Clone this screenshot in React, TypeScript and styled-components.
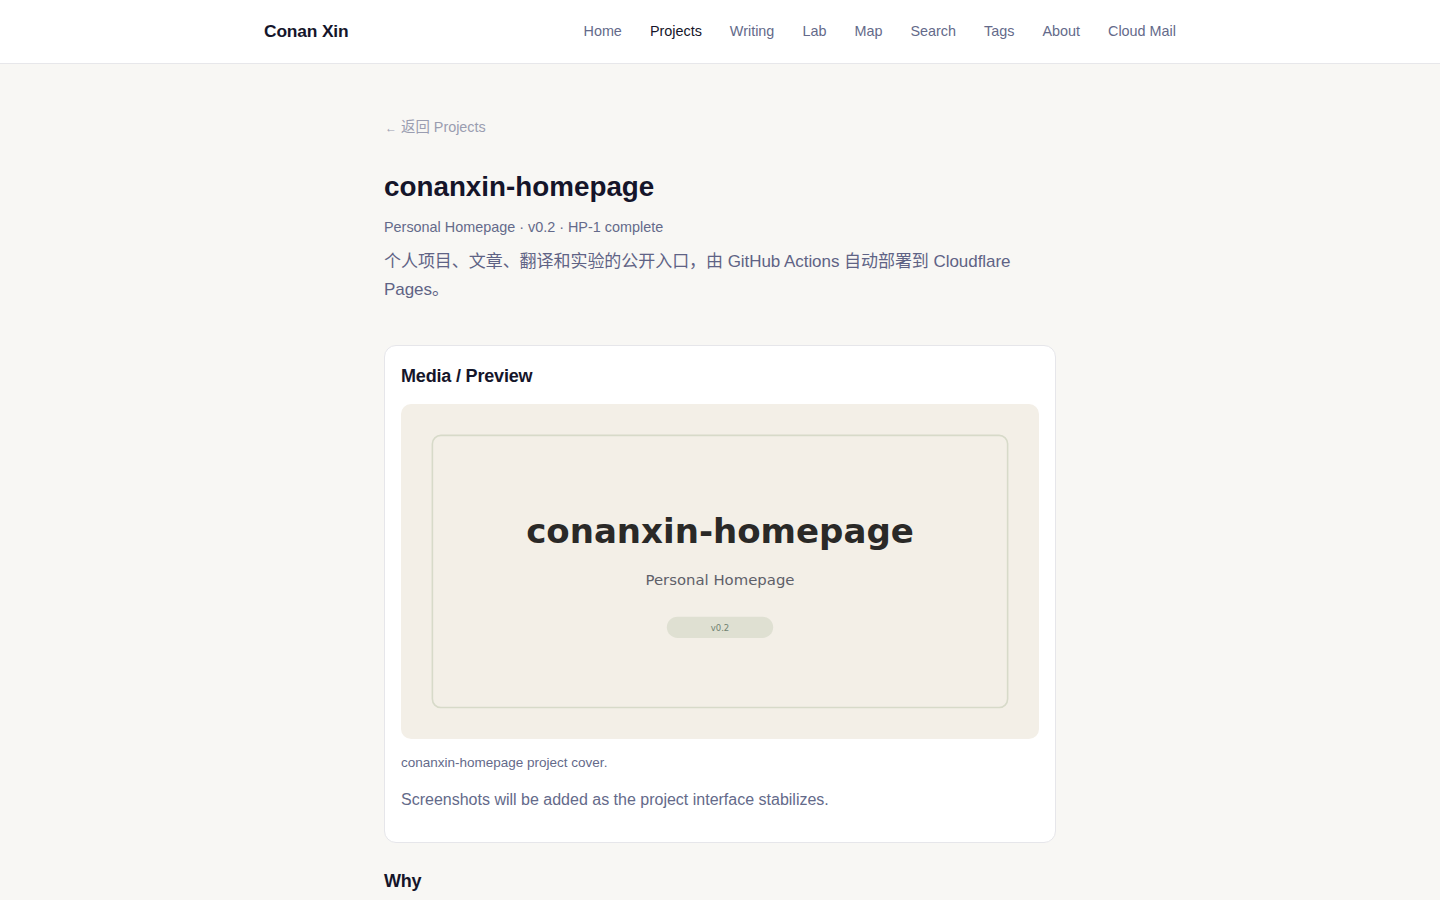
import styled, { createGlobalStyle } from 'styled-components';

const navItems = ['Home', 'Projects', 'Writing', 'Lab', 'Map', 'Search', 'Tags', 'About', 'Cloud Mail'];

const GlobalStyle = createGlobalStyle`
  * { box-sizing: border-box; }
  body {
    margin: 0;
    background: #f8f7f4;
    color: #17172b;
    font-family: "Liberation Sans", Arial, "Noto Sans CJK SC", sans-serif;
  }
`;

const Cover = () => (
  <CoverSvg viewBox="0 0 1200 630" role="img" aria-label="conanxin-homepage project cover">
    <rect width="1200" height="630" fill="#f3efe7" />
    <rect x="59" y="59" width="1082" height="512" rx="16" fill="#f3efe7" stroke="#d7dac9" strokeWidth="3" />
    <text x="600" y="262" textAnchor="middle" fontFamily="DejaVu Sans, sans-serif" fontWeight="700" fontSize="64" fill="#2a2927">
      conanxin-homepage
    </text>
    <text x="600" y="340" textAnchor="middle" fontFamily="DejaVu Sans, sans-serif" fontSize="28" fill="#5e6069">
      Personal Homepage
    </text>
    <rect x="500" y="400" width="200" height="40" rx="20" fill="#dfe0d2" />
    <text x="600" y="427" textAnchor="middle" fontFamily="DejaVu Sans, sans-serif" fontSize="16" fill="#6f8270">
      v0.2
    </text>
  </CoverSvg>
);

const App = () => {
  return (
    <>
      <GlobalStyle />
      <Header>
        <HeaderInner>
          <Logo href="#">Conan Xin</Logo>
          <Nav>
            {navItems.map(item => (
              <NavLink key={item} href="#" $active={item === 'Projects'}>
                {item}
              </NavLink>
            ))}
          </Nav>
        </HeaderInner>
      </Header>
      <Main>
        <BackLink href="#">
          <Arrow>←</Arrow> 返回 Projects
        </BackLink>
        <Title>conanxin-homepage</Title>
        <Meta>Personal Homepage · v0.2 · HP-1 complete</Meta>
        <Lead>个人项目、文章、翻译和实验的公开入口，由 GitHub Actions 自动部署到 Cloudflare Pages。</Lead>

        <Card>
          <SectionTitle>Media / Preview</SectionTitle>
          <Figure>
            <Cover />
            <Caption>conanxin-homepage project cover.</Caption>
          </Figure>
          <Note>Screenshots will be added as the project interface stabilizes.</Note>
        </Card>

        <Section>
          <SectionTitle>Why</SectionTitle>
        </Section>
      </Main>
    </>
  );
};

export default App;

const Header = styled.header`
  background: #ffffff;
  border-bottom: 1px solid #e7e7ea;
`;

const HeaderInner = styled.div`
  max-width: 912px;
  height: 63px;
  margin: 0 auto;
  padding-bottom: 2px;
  display: flex;
  align-items: center;
  justify-content: space-between;
`;

const Logo = styled.a`
  margin-top: 2px;
  font-size: 17.4px;
  font-weight: 700;
  color: #15152a;
  text-decoration: none;
  letter-spacing: -0.01em;
`;

const Nav = styled.nav`
  display: flex;
  gap: 28px;
`;

const NavLink = styled.a<{ $active?: boolean }>`
  font-size: 14.4px;
  color: ${p => (p.$active ? '#15152a' : '#646a8a')};
  text-decoration: none;
`;

const Main = styled.main`
  max-width: 672px;
  margin: 0 auto;
  padding: 51px 0 0;
`;

const BackLink = styled.a`
  display: inline-block;
  margin-left: 1px;
  font-size: 14.4px;
  color: #9a9db0;
  text-decoration: none;
`;

const Arrow = styled.span`
  font-size: 12px;
`;

const Title = styled.h1`
  margin: 34px 0 0;
  font-size: 27.8px;
  line-height: 1.2;
  font-weight: 700;
  color: #15152a;
`;

const Meta = styled.p`
  margin: 16px 0 0;
  font-size: 14.4px;
  color: #646a8a;
`;

const Lead = styled.p`
  margin: 13px 0 0;
  font-size: 17px;
  line-height: 28px;
  letter-spacing: -0.003em;
  color: #5f6385;
`;

const Card = styled.section`
  margin-top: 41px;
  padding: 18px 16px 33px;
  background: #ffffff;
  border: 1px solid #e6e6ea;
  border-radius: 12px;
`;

const SectionTitle = styled.h2`
  margin: 0;
  font-size: 18px;
  line-height: 24px;
  font-weight: 700;
  letter-spacing: -0.01em;
  color: #15152a;
`;

const Figure = styled.figure`
  margin: 16px 0 0;
`;

const CoverSvg = styled.svg`
  display: block;
  width: 100%;
  height: auto;
  border-radius: 10px;
`;

const Caption = styled.figcaption`
  margin-top: 16px;
  font-size: 13.5px;
  color: #646a8a;
`;

const Note = styled.p`
  margin: 21px 0 0;
  font-size: 16px;
  color: #646a8a;
`;

const Section = styled.section`
  margin-top: 26px;
  padding-bottom: 40px;
`;
